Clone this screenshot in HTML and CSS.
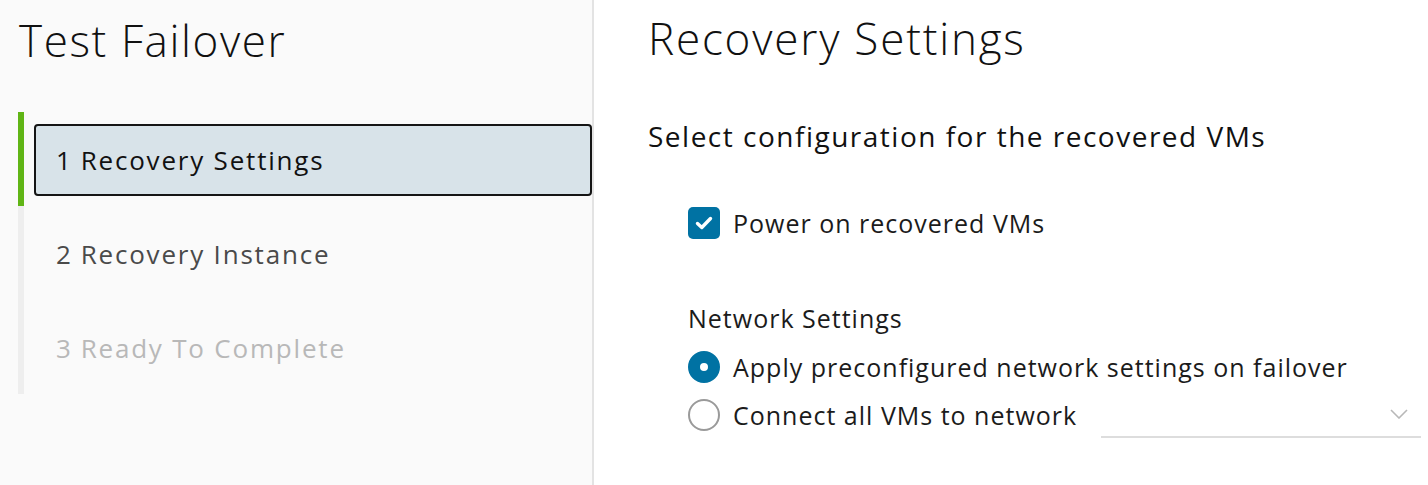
FILE: index.html
```html
<!DOCTYPE html>
<html lang="en">
<head>
    <meta charset="UTF-8">
    <title>Test Failover</title>
    <link rel="stylesheet" href="styles.css">
</head>
<body>
    <div class="wizard">
        <aside class="sidebar">
            <h1 class="wizard-title">Test Failover</h1>
            <nav class="steps">
                <div class="step active">
                    <div class="step-box"><span class="step-num">1</span>Recovery Settings</div>
                </div>
                <div class="step">
                    <div class="step-box"><span class="step-num">2</span>Recovery Instance</div>
                </div>
                <div class="step disabled">
                    <div class="step-box"><span class="step-num">3</span>Ready To Complete</div>
                </div>
            </nav>
        </aside>

        <main class="content">
            <h2 class="page-title">Recovery Settings</h2>
            <h3 class="section-title">Select configuration for the recovered VMs</h3>

            <label class="option checkbox-option">
                <span class="checkbox">
                    <svg width="18" height="14" viewBox="0 0 18 14">
                        <path d="M2.5 7.5 L6.8 11.5 L15.5 2.5" fill="none" stroke="#fff" stroke-width="3.4" stroke-linecap="round" stroke-linejoin="round"/>
                    </svg>
                </span>
                Power on recovered VMs
            </label>

            <div class="network">
                <div class="group-label">Network Settings</div>
                <label class="option">
                    <span class="radio checked"></span>
                    Apply preconfigured network settings on failover
                </label>
                <div class="option">
                    <span class="radio"></span>
                    <span class="option-text">Connect all VMs to network</span>
                    <div class="select">
                        <svg width="18" height="10" viewBox="0 0 18 10">
                            <path d="M1 1 L9 9 L17 1" fill="none" stroke="#b8b8b8" stroke-width="1.6"/>
                        </svg>
                    </div>
                </div>
            </div>
        </main>
    </div>
</body>
</html>
```

FILE: styles.css
```css
body {
    margin: 0;
    padding: 0;
    font-family: "Open Sans", Lato, sans-serif;
    color: #1b1b1b;
    background-color: #fff;
}

.wizard {
    display: flex;
    height: 485px;
}

.sidebar {
    width: 574px;
    padding-left: 18px;
    background-color: #fafafa;
    border-right: 2px solid #e3e3e3;
}

.wizard-title {
    font-size: 44px;
    font-weight: 300;
    letter-spacing: 1.6px;
    line-height: 52px;
    margin: 14px 0 0 1px;
    color: #111;
}

.steps {
    margin-top: 46px;
}

.step {
    height: 94px;
    border-left: 6px solid #eeeeee;
    padding: 12px 0 0 10px;
    box-sizing: border-box;
}

.step.active {
    border-left-color: #60b515;
}

.step-box {
    display: flex;
    align-items: center;
    height: 72px;
    box-sizing: border-box;
    padding-left: 20px;
    font-size: 26px;
    letter-spacing: 1.8px;
    color: #4a4a4a;
    border: 2px solid transparent;
    border-radius: 4px;
}

.step.active .step-box {
    background-color: #d8e3e9;
    border-color: #151515;
    color: #111;
}

.step.disabled .step-box {
    color: #b8b8b8;
}

.step-num {
    margin-right: 8px;
}

.content {
    flex: 1;
    padding-left: 54px;
}

.page-title {
    font-size: 44px;
    font-weight: 300;
    letter-spacing: 1.8px;
    line-height: 52px;
    margin: 12px 0 0;
    color: #111;
}

.section-title {
    font-size: 28px;
    font-weight: 400;
    letter-spacing: 1.5px;
    line-height: 34px;
    margin: 55px 0 0;
    color: #111;
}

.option {
    display: flex;
    align-items: center;
    font-size: 25px;
    letter-spacing: 1px;
    color: #1b1b1b;
    height: 48px;
    margin-left: 40px;
}

.checkbox-option {
    margin-top: 46px;
}

.checkbox {
    width: 32px;
    height: 32px;
    border-radius: 5px;
    background-color: #0072a3;
    display: flex;
    align-items: center;
    justify-content: center;
    margin-right: 13px;
}

.network {
    margin-top: 54px;
}

.group-label {
    margin-left: 40px;
    font-size: 25px;
    letter-spacing: 1px;
    line-height: 34px;
    margin-bottom: 8px;
}

.radio {
    width: 32px;
    height: 32px;
    box-sizing: border-box;
    border-radius: 50%;
    border: 2px solid #9a9a9a;
    margin-right: 13px;
    background-color: #fff;
}

.radio.checked {
    border: 12px solid #0072a3;
}

.select {
    align-self: flex-start;
    width: 320px;
    height: 46px;
    margin: 1px 0 0 24px;
    border-bottom: 2px solid #dddddd;
    display: flex;
    align-items: center;
    justify-content: flex-end;
    padding-right: 13px;
    box-sizing: border-box;
}
```
